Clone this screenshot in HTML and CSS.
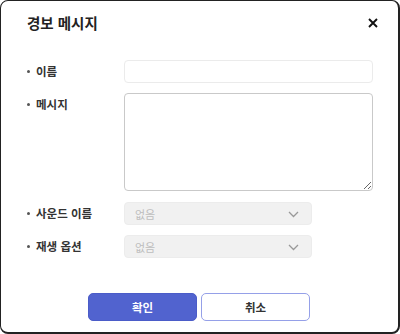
FILE: index.html
```html
<!DOCTYPE html>
<html lang="ko">
<head>
<meta charset="utf-8">
<link rel="stylesheet" href="styles.css">
</head>
<body>
<div class="dialog">
  <div class="header">
    <h1 class="title">경보 메시지</h1>
    <button class="close" aria-label="닫기">
      <svg width="10" height="10" viewBox="0 0 10 10"><path d="M1 1L9 9M9 1L1 9" stroke="#111" stroke-width="1.9" stroke-linecap="butt"/></svg>
    </button>
  </div>
  <div class="form">
    <div class="row">
      <label class="label">이름</label>
      <input class="input" type="text">
    </div>
    <div class="row">
      <label class="label">메시지</label>
      <textarea class="textarea"></textarea>
    </div>
    <div class="row">
      <label class="label">사운드 이름</label>
      <div class="select"><span>없음</span>
        <svg width="11" height="7" viewBox="0 0 11 7"><path d="M1 1L5.5 5.5L10 1" fill="none" stroke="#999" stroke-width="1.3"/></svg>
      </div>
    </div>
    <div class="row">
      <label class="label">재생 옵션</label>
      <div class="select"><span>없음</span>
        <svg width="11" height="7" viewBox="0 0 11 7"><path d="M1 1L5.5 5.5L10 1" fill="none" stroke="#999" stroke-width="1.3"/></svg>
      </div>
    </div>
  </div>
  <div class="actions">
    <button class="btn primary">확인</button>
    <button class="btn secondary">취소</button>
  </div>
</div>
</body>
</html>
```
FILE: styles.css
```css
* { box-sizing: border-box; }
html, body { margin: 0; padding: 0; background: #fff; }
body {
  font-family: "Noto Sans CJK KR", "Noto Sans", sans-serif;
  color: #333;
}
.dialog {
  width: 400px;
  height: 334px;
  border: 1px solid #222;
  border-right-width: 2px;
  border-bottom-width: 2px;
  border-radius: 8px;
  background: #fff;
  display: flex;
  flex-direction: column;
  padding: 0 25px 0 26px;
}
.header {
  height: 41px;
  display: flex;
  align-items: center;
  justify-content: space-between;
  padding-top: 1px;
}
.title {
  margin: 0;
  font-size: 14.5px;
  font-weight: 700;
  color: #222;
}
.close {
  border: 0;
  background: none;
  padding: 0;
  width: 10px;
  height: 10px;
  display: flex;
  margin-right: -5px;
  margin-top: 1px;
}
.form {
  margin-top: 18px;
  display: flex;
  flex-direction: column;
  gap: 10px;
}
.row {
  display: grid;
  grid-template-columns: 97px 1fr;
  align-items: start;
}
.label {
  font-size: 11.5px;
  font-weight: 700;
  color: #333;
  line-height: 23px;
  display: flex;
  align-items: center;
}
.label::before {
  content: "";
  width: 3px;
  height: 3px;
  border-radius: 50%;
  background: #555;
  margin-right: 6px;
}
.input {
  height: 23px;
  width: 249px;
  border: 1px solid #ebebeb;
  border-radius: 4px;
  background: #fff;
  outline: none;
}
.textarea {
  height: 98px;
  width: 249px;
  border: 1px solid #c9c9c9;
  border-radius: 4px;
  resize: vertical;
  margin: 0;
  display: block;
  font-family: inherit;
  outline: none;
  margin-bottom: 1px;
}
.select {
  width: 188px;
  height: 23px;
  background: #f1f1f1;
  border: 1px solid #ececec;
  border-radius: 4px;
  display: flex;
  align-items: center;
  justify-content: space-between;
  padding: 0 12px 0 10px;
  font-size: 11px;
  color: #bdbdbd;
}
.select svg { margin-top: 1px; }
.actions {
  margin-top: auto;
  margin-bottom: 11px;
  display: flex;
  justify-content: center;
  gap: 4px;
  padding-right: 2px;
}
.btn {
  width: 109px;
  height: 28px;
  border-radius: 5px;
  font-family: inherit;
  font-size: 11.5px;
  font-weight: 700;
  padding: 0;
}
.primary {
  background: #5163cf;
  border: 1px solid #4b5cc8;
  color: #fff;
}
.secondary {
  background: #fff;
  border: 1.5px solid #95a0e8;
  color: #333;
}
```
